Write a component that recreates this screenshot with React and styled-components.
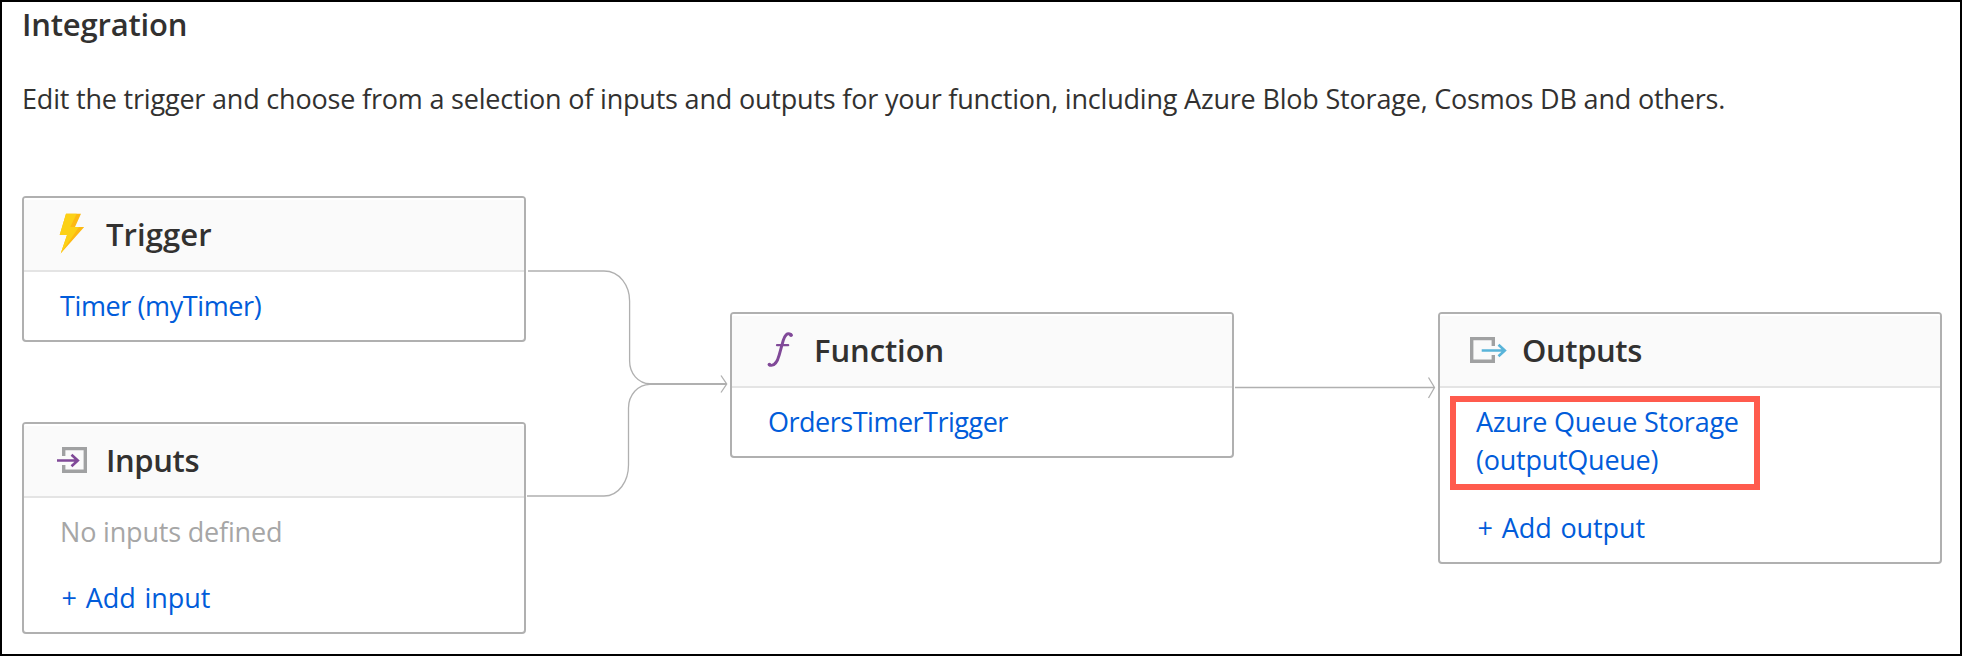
import React from "react";
import styled, { createGlobalStyle } from "styled-components";

const GlobalStyle = createGlobalStyle`
  *, *::before, *::after { box-sizing: border-box; }
  body { margin: 0; background: #fff; }
`;

const Page = styled.main`
  width: 1962px;
  height: 656px;
  border: 2px solid #000;
  padding: 0 18px 0 20px;
  background: #fff;
  color: #323130;
  font-family: "Open Sans", "Noto Sans", sans-serif;
  overflow: hidden;
`;

const Title = styled.h1`
  margin: 1px 0 0;
  font-size: 31px;
  font-weight: 600;
  line-height: 42px;
  letter-spacing: -0.2px;
`;

const Description = styled.p`
  margin: 35px 0 0;
  font-size: 27px;
  line-height: 38px;
  letter-spacing: -0.195px;
  white-space: nowrap;
`;

const Diagram = styled.section`
  display: flex;
  align-items: flex-start;
  margin-top: 78px;
`;

const Column = styled.div`
  flex: none;
  display: flex;
  flex-direction: column;
  gap: 80px;
  width: 504px;
  padding-top: ${(p) => (p.$lowered ? 116 : 0)}px;
`;

const Card = styled.article`
  border: 2px solid #b0b0b0;
  border-radius: 4px;
  background: #fff;
  overflow: hidden;
`;

const CardHeader = styled.header`
  display: flex;
  align-items: center;
  gap: 12px;
  height: 74px;
  padding-left: 30px;
  border-bottom: 2px solid #e4e4e4;
  background: #fafafa;
  box-shadow: inset 0 2px #fff;
`;

const CardTitle = styled.h2`
  margin: 0;
  font-size: 31px;
  font-weight: 600;
  line-height: 42px;
  letter-spacing: ${(p) => p.$tracking}px;
`;

const CardBody = styled.div`
  display: flex;
  flex-direction: column;
  align-items: flex-start;
  gap: ${(p) => p.$gap || 28}px;
  padding: 15px 36px;
  font-size: 27px;
  line-height: 38px;
`;

const BindingLink = styled.a`
  color: #015cda;
  letter-spacing: ${(p) => p.$tracking || 0}px;
  white-space: nowrap;
`;

const AddLink = styled(BindingLink)`
  padding-left: 1.5px;
  word-spacing: 2px;
`;

const BindingLine = styled.span`
  display: block;
  letter-spacing: ${(p) => p.$tracking}px;
`;

const Empty = styled.span`
  color: #a6a6a6;
  letter-spacing: -0.18px;
`;

const Highlighted = styled.div`
  position: relative;

  &::after {
    content: "";
    position: absolute;
    top: -7px;
    left: -26px;
    width: 310px;
    height: 94px;
    border: 6px solid #ff5b4d;
    pointer-events: none;
  }
`;

const Icon = styled.svg.attrs({ viewBox: "0 0 40 44", fill: "none", "aria-hidden": true })`
  flex: none;
  width: 40px;
  height: 44px;
`;

const Connector = styled.svg.attrs({ viewBox: "0 0 204 438", fill: "none", "aria-hidden": true })`
  flex: none;
  width: 204px;
  height: 438px;
  stroke: #b0b0b0;
  stroke-width: 1.3;
`;

const BoltIcon = () => (
  <Icon>
    <path d="M12 1.8H27L21 15H30.2L6.7 41.6L13 23H5.7Z" fill="#fdb913" />
    <path d="M12 1.8H22.7L16.3 15H25L6.7 41.6L13 23H5.7Z" fill="#fcd116" />
  </Icon>
);

const InputIcon = () => (
  <Icon>
    <path d="M9.7 18V10.6H31.3V33.3H9.7V27" stroke="#a0a1a2" strokeWidth="3.4" />
    <path d="M3 22.5H23.5M17.5 16.8L23.8 22.5L17.5 28.2" stroke="#804998" strokeWidth="2.6" />
  </Icon>
);

const OutputIcon = () => (
  <Icon>
    <path d="M23.3 18V10.6H1.7V33.3H23.3V27" stroke="#a0a1a2" strokeWidth="3.4" />
    <path d="M11.7 22.5H34M28.5 16.8L34.8 22.5L28.5 28.2" stroke="#59b4d9" strokeWidth="2.6" />
  </Icon>
);

const FunctionIcon = () => (
  <Icon>
    <g stroke="#804998" strokeLinecap="round">
      <path d="M29 6.6C25 4.2 22.6 7.6 21.2 12.5L17.2 27C15.4 33.6 13 38.6 7.8 37.2" strokeWidth="2.9" />
      <path d="M15 17.2H26.2" strokeWidth="2.2" />
    </g>
    <circle cx="29" cy="7.3" r="1.8" fill="#804998" />
    <circle cx="7.4" cy="36.6" r="1.8" fill="#804998" />
  </Icon>
);

export default function App() {
  return (
    <>
      <GlobalStyle />
      <Page>
        <Title>Integration</Title>
        <Description>
          Edit the trigger and choose from a selection of inputs and outputs for your function, including Azure Blob
          Storage, Cosmos DB and others.
        </Description>
        <Diagram>
          <Column>
            <Card>
              <CardHeader>
                <BoltIcon />
                <CardTitle $tracking={0.08}>Trigger</CardTitle>
              </CardHeader>
              <CardBody>
                <BindingLink $tracking={-0.4}>Timer (myTimer)</BindingLink>
              </CardBody>
            </Card>
            <Card>
              <CardHeader>
                <InputIcon />
                <CardTitle $tracking={-0.4}>Inputs</CardTitle>
              </CardHeader>
              <CardBody>
                <Empty>No inputs defined</Empty>
                <AddLink $tracking={-0.08}>+ Add input</AddLink>
              </CardBody>
            </Card>
          </Column>
          <Connector>
            <path d="M2 75H78C94 75 103.6 90 103.6 105V165C103.6 177 112 187.7 124 187.7H200" />
            <path d="M1 300H78C93 300 102.5 285 102.5 269V212C102.5 199 112 188.3 124 188.3H200" />
            <path d="M195 179.5L200.7 188L195 196.5" />
          </Connector>
          <Column $lowered>
            <Card>
              <CardHeader>
                <FunctionIcon />
                <CardTitle $tracking={-0.09}>Function</CardTitle>
              </CardHeader>
              <CardBody>
                <BindingLink $tracking={-0.49}>OrdersTimerTrigger</BindingLink>
              </CardBody>
            </Card>
          </Column>
          <Connector>
            <path d="M1 191.5H200M194.5 181.5L200.5 191.5L194.5 202" />
          </Connector>
          <Column $lowered>
            <Card>
              <CardHeader>
                <OutputIcon />
                <CardTitle $tracking={-0.4}>Outputs</CardTitle>
              </CardHeader>
              <CardBody $gap={30}>
                <Highlighted>
                  <BindingLink>
                    <BindingLine $tracking={-0.25}>Azure Queue Storage</BindingLine>
                    <BindingLine $tracking={-0.25}>(outputQueue)</BindingLine>
                  </BindingLink>
                </Highlighted>
                <AddLink $tracking={-0.1}>+ Add output</AddLink>
              </CardBody>
            </Card>
          </Column>
        </Diagram>
      </Page>
    </>
  );
}
